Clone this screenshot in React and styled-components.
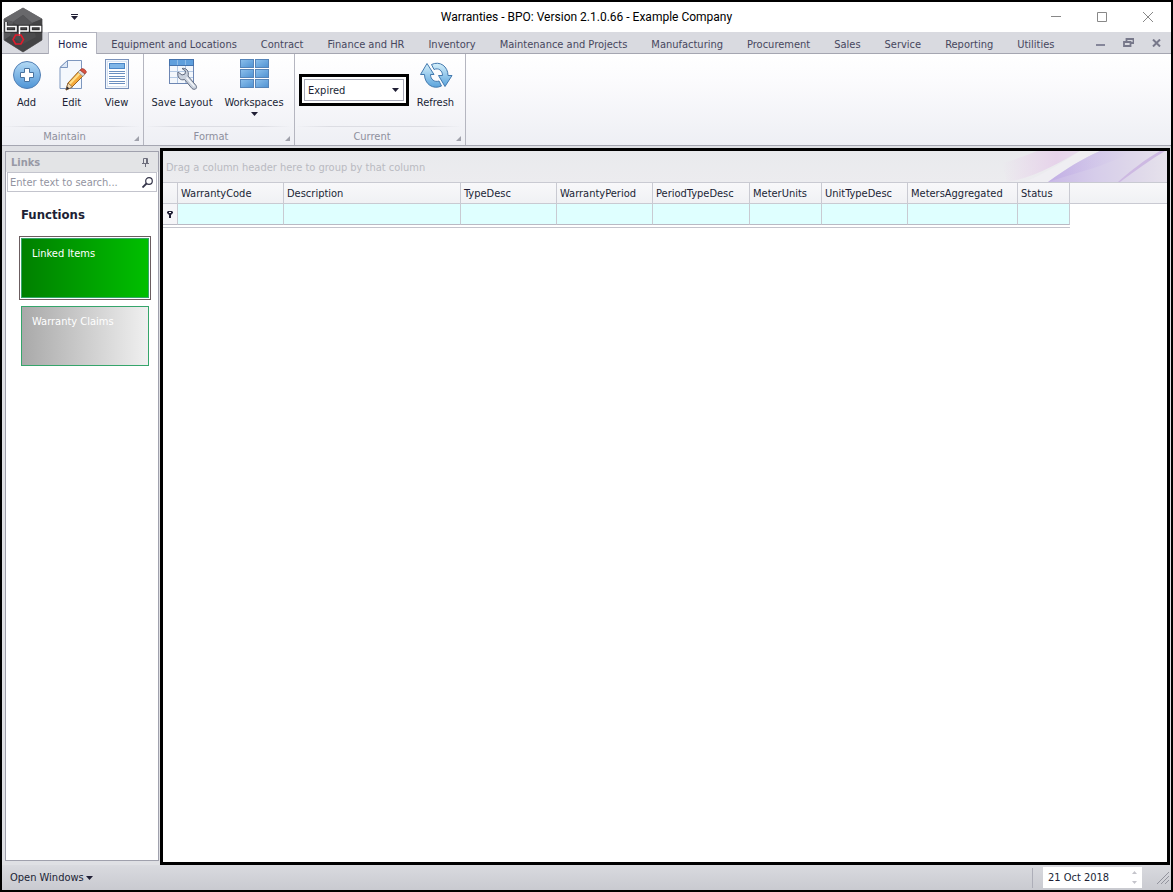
import React, { useState } from "react";
import styled, { createGlobalStyle } from "styled-components";

const GlobalStyle = createGlobalStyle`
  * {
    box-sizing: border-box;
  }

  body {
    margin: 0;
    font-family: "DejaVu Sans Condensed", "Noto Sans", Tahoma, sans-serif;
    font-size: 11px;
    line-height: 14px;
    color: #201f35;
  }

  button,
  input,
  select {
    font: inherit;
    color: inherit;
    margin: 0;
    padding: 0;
    border: 0;
    border-radius: 0;
    background: none;
  }
`;

const Window = styled.div`
  position: relative;
  display: flex;
  flex-direction: column;
  height: 100vh;
  border: 2px solid #000;
  background: #dfe0e4;
  overflow: hidden;
`;

const Logo = styled.svg`
  position: absolute;
  left: 1px;
  top: 5px;
  width: 40px;
  height: 46px;
`;

const TitleBar = styled.header`
  display: grid;
  grid-template-columns: 1fr auto 1fr;
  align-items: center;
  height: 30px;
  flex: none;
  background: #fff;
`;

const Title = styled.h1`
  margin: 0;
  font-family: Roboto, "Open Sans", sans-serif;
  font-size: 12px;
  font-weight: 400;
  color: #000;
`;

const QuickMenu = styled.button`
  display: flex;
  margin-left: 68px;
  width: 9px;
`;

const WindowButtons = styled.div`
  display: flex;
  justify-content: flex-end;
`;

const WindowButton = styled.button`
  display: flex;
  align-items: center;
  justify-content: center;
  width: 46px;
  height: 28px;
`;

const TabBar = styled.nav`
  display: flex;
  flex: none;
  height: 22px;
  padding-left: 46px;
  background: #d9dae0;
  border-bottom: 1px solid #a5a6b1;
`;

const Tab = styled.button`
  height: 21px;
  padding: 4px 12px 0;
  color: #47475e;
  white-space: nowrap;

  ${(p) =>
    p.$active &&
    `
    height: 22px;
    padding: 3px 9px 0;
    margin-right: 2px;
    color: #1e1e50;
    background: #fff;
    border: 1px solid #b3b4bf;
    border-bottom: 0;
  `}
`;

const MdiButtons = styled.div`
  display: flex;
  align-items: center;
  margin-left: auto;
  padding-right: 1px;
`;

const MdiButton = styled.button`
  display: flex;
  align-items: center;
  justify-content: center;
  width: 28px;
  height: 20px;
`;

const Ribbon = styled.section`
  display: flex;
  flex: none;
  height: 92px;
  background: linear-gradient(#fff, #fbfbfd 30%, #eeeff4);
  border-bottom: 1px solid #a5a6b1;
`;

const Group = styled.div`
  display: flex;
  flex-direction: column;
  border-right: 1px solid #b5b6c0;
  padding: 0 4px 0 2px;
`;

const GroupItems = styled.div`
  display: flex;
  height: 72px;
`;

const GroupCaption = styled.div`
  position: relative;
  height: 19px;
  padding-top: 3px;
  padding-right: 14px;
  text-align: center;
  color: #8e8f9d;
  border-top: 1px solid;
  border-image: linear-gradient(90deg, transparent, #dcdde3 20%, #dcdde3 80%, transparent) 1;
`;

const Launcher = styled.svg`
  position: absolute;
  right: 0;
  bottom: 4px;
`;

const RibbonButton = styled.button`
  display: flex;
  flex-direction: column;
  align-items: center;
  width: ${(p) => p.$width}px;
  padding-top: 5px;
  white-space: nowrap;

  svg {
    flex: none;
  }

  span {
    margin: 5px 0 2px;
  }
`;

const FilterBox = styled.label`
  position: relative;
  display: block;
  width: 110px;
  height: 32px;
  margin: 20px 1px 0 2px;
  padding: 2px;
  border: 3px solid #000;
  background: #fff;

  svg {
    position: absolute;
    right: 7px;
    top: 11px;
    pointer-events: none;
  }
`;

const FilterSelect = styled.select`
  appearance: none;
  width: 100%;
  height: 22px;
  padding: 1px 3px 0;
  border: 1px solid #a9aab8;
  background: #fff;
`;

const Body = styled.main`
  display: flex;
  flex: 1;
  min-height: 0;
  padding: 2px 1px 0 3px;
  gap: 1px;
`;

const Sidebar = styled.aside`
  flex: none;
  width: 154px;
  margin: 3px 0 4px;
  border: 1px solid #a0a1ad;
  background: #fff;
`;

const SidebarHeader = styled.div`
  display: flex;
  align-items: center;
  justify-content: space-between;
  height: 20px;
  padding: 1px 9px 0 5px;
  background: #e3e4e6;
  color: #9899a5;
  font-weight: 700;

  h2 {
    margin: 0;
    font-size: 11px;
  }

  button {
    display: flex;
  }
`;

const SearchBox = styled.label`
  display: flex;
  align-items: center;
  height: 20px;
  margin: 0 1px;
  padding: 0 3px 0 2px;
  border: 1px solid #c3c4cd;

  input {
    flex: 1;
    min-width: 0;
    padding-top: 2px;
    outline: 0;
  }

  input::placeholder {
    color: #92939f;
    opacity: 1;
  }
`;

const Functions = styled.div`
  display: flex;
  flex-direction: column;
  padding: 15px 7px 0 13px;

  h3 {
    margin: 0 0 13px 2px;
    font-size: 13px;
    line-height: 16px;
  }
`;

const Tile = styled.button`
  height: 60px;
  margin: 2px 2px 6px;
  padding: 8px 10px;
  display: flex;
  border: 1px solid #35a56b;
  color: #fff;
  background: ${(p) =>
    p.$selected
      ? "linear-gradient(90deg, #008000, #00bf00)"
      : "linear-gradient(90deg, #a9a9a9, #f0f0f0)"};
  outline: ${(p) => (p.$selected ? "1px solid #6b5d60" : "0")};
  outline-offset: 1px;
`;

const GridFrame = styled.section`
  display: flex;
  flex-direction: column;
  flex: 1;
  min-width: 0;
  border: 3px solid #000;
  background: #fff;
`;

const GroupPanel = styled.div`
  position: relative;
  display: flex;
  align-items: center;
  flex: none;
  height: 31px;
  padding: 2px 0 0 3px;
  color: #b9bac1;
  background: linear-gradient(#e9eaed, #ececef);

  svg {
    position: absolute;
    right: 0;
    top: 0;
  }
`;

const Table = styled.table`
  width: 100%;
  table-layout: fixed;
  border-collapse: separate;
  border-spacing: 0;

  th {
    height: 22px;
    padding: 2px 3px 0;
    text-align: left;
    font-weight: 400;
    white-space: nowrap;
    background: linear-gradient(#f8f8fa, #f0f1f4);
    border: 1px solid #c9cad2;
    border-width: 1px 1px 1px 0;
  }

  th:first-child,
  td:first-child {
    padding: 0;
  }

  th:last-child {
    border-right: 0;
  }

  td {
    height: 21px;
    padding: 0;
    background: #dfffff;
    border-right: 1px solid #c9cad2;
    border-bottom: 1px solid #b9bac4;
  }

  td:first-child {
    background: #f5f5f8;
  }

  td:last-child {
    background: #fff;
    border: 0;
  }

  td svg {
    display: block;
    margin: 0 auto;
  }

  td input {
    display: block;
    width: 100%;
    height: 20px;
    padding: 0 4px;
    outline: 0;
  }
`;

const TableEnd = styled.div`
  width: 907px;
  height: 3px;
  border-bottom: 1px solid #c3c4cc;
`;

const StatusBar = styled.footer`
  display: flex;
  align-items: center;
  flex: none;
  height: 25px;
  padding: 0 2px 0 8px;
  background: linear-gradient(#d9dadf, #c9cad0);
`;

const OpenWindows = styled.button`
  display: flex;
  align-items: center;
  gap: 2px;
  margin-right: auto;
`;

const Divider = styled.div`
  width: 1px;
  height: 20px;
  margin-right: 10px;
  background: #adaeb8;
`;

const DateBox = styled.label`
  display: flex;
  align-items: center;
  width: 99px;
  height: 21px;
  margin-right: 15px;
  padding: 0 3px 0 5px;
  background: #fff;

  input {
    flex: 1;
    min-width: 0;
  }
`;

const Spinner = styled.span`
  display: flex;
  flex-direction: column;

  button {
    display: flex;
    align-items: center;
    justify-content: center;
    width: 9px;
    height: 10px;
  }
`;

const TABS = [
  "Home",
  "Equipment and Locations",
  "Contract",
  "Finance and HR",
  "Inventory",
  "Maintenance and Projects",
  "Manufacturing",
  "Procurement",
  "Sales",
  "Service",
  "Reporting",
  "Utilities",
];

const COLUMNS = [
  { name: "WarrantyCode", width: 106 },
  { name: "Description", width: 177 },
  { name: "TypeDesc", width: 96 },
  { name: "WarrantyPeriod", width: 96 },
  { name: "PeriodTypeDesc", width: 97 },
  { name: "MeterUnits", width: 72 },
  { name: "UnitTypeDesc", width: 86 },
  { name: "MetersAggregated", width: 110 },
  { name: "Status", width: 52 },
];

const DownArrow = () => (
  <svg width="7" height="4" viewBox="0 0 7 4">
    <path d="M0 0h7L3.5 4z" fill="#201f35" />
  </svg>
);

const BpoLogo = () => (
  <Logo viewBox="0 0 40 46">
    <path d="M20 1L39 12V33L20 45L1 33V12z" fill="#4b4b4d" stroke="#77777a" />
    <path d="M20 1L39 12L29 16L20 8L10 15L1 12z" fill="#68686b" />
    <path d="M1 12L10 15L7 29L1 33z" fill="#59595c" />
    <path d="M39 12L29 16L33 30L39 33z" fill="#444446" />
    <path d="M7 29L20 37L33 30L39 33L20 45L1 33z" fill="#434345" />
    <path d="M20 8L29 16L20 22L10 15z" fill="#555558" />
    <path
      d="M3 15V24H13V19.500H3M16.500 29V19.500H25V24H16.500M28 19.500H37.500V24H28z"
      fill="none"
      stroke="#2c2c2e"
      strokeWidth="3.400"
    />
    <path
      d="M3 15V24H13V19.500H3M16.500 29V19.500H25V24H16.500M28 19.500H37.500V24H28z"
      fill="none"
      stroke="#fff"
      strokeWidth="1.600"
    />
    <path
      d="M12.500 28H18L20.500 32.500L18 37H12.500L10 32.500z"
      fill="none"
      stroke="#e01c2c"
      strokeWidth="1.600"
    />
  </Logo>
);

const AddIcon = () => (
  <svg width="32" height="32" viewBox="0 0 32 32">
    <defs>
      <linearGradient id="addFill" x2="0" y2="1">
        <stop stopColor="#b4daf5" />
        <stop offset="1" stopColor="#4e94d6" />
      </linearGradient>
    </defs>
    <circle cx="16" cy="16" r="13.500" fill="url(#addFill)" stroke="#527fb4" />
    <path
      d="M13.500 9.500h5v4h4v5h-4v4h-5v-4h-4v-5h4z"
      fill="#fff"
      stroke="#48729f"
    />
  </svg>
);

const EditIcon = () => (
  <svg width="32" height="32" viewBox="0 0 32 32">
    <path d="M11.500 1.500h14v28h-21.500v-21z" fill="#f4f8fd" stroke="#7d97bf" />
    <path d="M11.500 1.500v7h-7.500z" fill="#dce7f5" stroke="#7d97bf" />
    <path d="M10 31L12 24L24 11L29 15L16 28z" fill="#f5a93a" stroke="#9a6424" />
    <path d="M13.500 25L25.500 12.500" stroke="#ffe08a" strokeWidth="2" />
    <path d="M10 31L12 24L16.500 28z" fill="#f4dcb5" stroke="#7d5a35" strokeWidth=".7" />
    <path d="M10 31l1-3.500l2.500 2z" fill="#2c2c38" />
    <path d="M22 13L24 11L29 15L27 17.500z" fill="#ddd" stroke="#888" strokeWidth=".7" />
    <path d="M24 11l2-1.500q3 0 4.500 3.500L29 15z" fill="#d9513f" stroke="#9f3a30" strokeWidth=".7" />
  </svg>
);

const ViewIcon = () => (
  <svg width="32" height="32" viewBox="0 0 32 32">
    <rect x="4.500" y="0.500" width="23" height="29" fill="#f1f6fc" stroke="#7991ba" />
    <rect x="6.500" y="2.500" width="19" height="25" fill="#fff" stroke="#d5e1f1" />
    <rect x="8.500" y="4.500" width="15" height="5" fill="#7fb6e8" stroke="#4b86c6" />
    <path
      d="M8 12.500h16M8 14.500h16M8 17.500h16M8 19.500h16M8 22.500h16M8 24.500h16"
      stroke="#6b8fc0"
    />
  </svg>
);

const SaveLayoutIcon = () => (
  <svg width="32" height="32" viewBox="0 0 32 32">
    <rect x="3.500" y="0.500" width="24" height="24" fill="#f3f7fc" stroke="#6d86b3" />
    <rect x="3.500" y="0.500" width="24" height="6" fill="#5e9fdd" stroke="#4472ac" />
    <path d="M11.500 7v17M19.500 7v17M4 12.500h23M4 18.500h23" stroke="#b4c9e4" />
    <path d="M11.500 1v5M19.500 1v5" stroke="#8cbbe8" />
    <path
      d="M12 13L16 16L19 15L19.500 12L16 9.500C20 8.500 23.500 12 22 17L30 26.500C32 29.500 28.500 31.500 26 29.500L18.500 20.500C14 22 11 18 12 13z"
      fill="#c9d1dd"
      stroke="#636c80"
    />
    <path d="M20.500 18.500l8 9" stroke="#f4f6f9" strokeWidth="1.500" />
  </svg>
);

const WorkspacesIcon = () => (
  <svg width="32" height="32" viewBox="0 0 32 32">
    <defs>
      <linearGradient id="cellFill" x2="1" y2="1">
        <stop stopColor="#8dc0ec" />
        <stop offset="1" stopColor="#4e91d2" />
      </linearGradient>
    </defs>
    {[0, 10, 20].map((y) =>
      [2, 17].map((x) => (
        <rect
          key={`${x}-${y}`}
          x={x + 0.5}
          y={y + 0.5}
          width="13"
          height="8"
          fill="url(#cellFill)"
          stroke="#5584b9"
        />
      ))
    )}
  </svg>
);

const RefreshIcon = () => (
  <svg width="34" height="32" viewBox="0 0 34 32">
    <defs>
      <linearGradient id="refreshFill" x2="0" y2="1">
        <stop stopColor="#d5f0fb" />
        <stop offset="1" stopColor="#5aa3dc" />
      </linearGradient>
    </defs>
    <path
      d="M8 4.500L15 15.500H11.500C11.500 20.500 15.500 23.500 20 22L22.500 27C14 31 5.500 25 5.500 15.500H1.500z"
      fill="url(#refreshFill)"
      stroke="#4379ae"
    />
    <path
      d="M26 27.500L33 16.500H29C29 7.500 21 1.500 12.500 5.500L15 10.500C19.500 8.500 23.500 11.500 23.500 16.500H19.500z"
      fill="url(#refreshFill)"
      stroke="#4379ae"
    />
  </svg>
);

function RibbonGroup({ caption, children }) {
  return (
    <Group>
      <GroupItems>{children}</GroupItems>
      <GroupCaption>
        {caption}
        <Launcher width="5" height="5" viewBox="0 0 5 5">
          <path d="M5 0v5H0z" fill="#a0a1ab" />
        </Launcher>
      </GroupCaption>
    </Group>
  );
}

function RibbonBar() {
  const [filter, setFilter] = useState("Expired");

  return (
    <Ribbon>
      <RibbonGroup caption="Maintain">
        <RibbonButton $width={45}>
          <AddIcon />
          <span>Add</span>
        </RibbonButton>
        <RibbonButton $width={45}>
          <EditIcon />
          <span>Edit</span>
        </RibbonButton>
        <RibbonButton $width={45}>
          <ViewIcon />
          <span>View</span>
        </RibbonButton>
      </RibbonGroup>
      <RibbonGroup caption="Format">
        <RibbonButton $width={72}>
          <SaveLayoutIcon />
          <span>Save Layout</span>
        </RibbonButton>
        <RibbonButton $width={72}>
          <WorkspacesIcon />
          <span>Workspaces</span>
          <DownArrow />
        </RibbonButton>
      </RibbonGroup>
      <RibbonGroup caption="Current">
        <FilterBox>
          <FilterSelect
            aria-label="Status filter"
            value={filter}
            onChange={(e) => setFilter(e.target.value)}
          >
            <option>Expired</option>
          </FilterSelect>
          <DownArrow />
        </FilterBox>
        <RibbonButton $width={51}>
          <RefreshIcon />
          <span>Refresh</span>
        </RibbonButton>
      </RibbonGroup>
    </Ribbon>
  );
}

function LinksPanel() {
  return (
    <Sidebar>
      <SidebarHeader>
        <h2>Links</h2>
        <button aria-label="Pin">
          <svg width="7" height="9" viewBox="0 0 7 9">
            <path d="M1.500 5V.5h4V5M0 5.500h7M3.500 6v3M4.500 1v4" fill="none" stroke="#6d6e7c" />
          </svg>
        </button>
      </SidebarHeader>
      <SearchBox>
        <input aria-label="Search" placeholder="Enter text to search..." />
        <svg width="11" height="11" viewBox="0 0 11 11">
          <circle cx="7" cy="4" r="3.300" fill="none" stroke="#35354a" strokeWidth="1.200" />
          <path d="M4.500 6.500L.5 10.500" stroke="#35354a" strokeWidth="1.800" />
        </svg>
      </SearchBox>
      <Functions>
        <h3>Functions</h3>
        <Tile $selected>Linked Items</Tile>
        <Tile>Warranty Claims</Tile>
      </Functions>
    </Sidebar>
  );
}

function WarrantyGrid() {
  return (
    <GridFrame>
      <GroupPanel>
        Drag a column header here to group by that column
        <svg width="165" height="31" viewBox="0 0 165 31">
          <defs>
            <linearGradient id="pinkFade">
              <stop stopColor="#e8d2ea" stopOpacity="0" />
              <stop offset=".7" stopColor="#e6d3ea" />
              <stop offset="1" stopColor="#e8dcee" />
            </linearGradient>
            <linearGradient id="violetFade">
              <stop stopColor="#c9b9e6" />
              <stop offset=".4" stopColor="#d6cdea" />
              <stop offset=".8" stopColor="#e0daea" />
              <stop offset="1" stopColor="#e6e2ec" />
            </linearGradient>
            <linearGradient id="streakFade">
              <stop stopColor="#bda8e4" stopOpacity=".6" />
              <stop offset="1" stopColor="#cfc2ec" stopOpacity="0" />
            </linearGradient>
          </defs>
          <path d="M0 12C15 8 25 4 35 0H78C60 10 35 26 5 31z" fill="url(#pinkFade)" />
          <path d="M46 31C65 17 80 8 98 0H78C60 12 40 24 22 31z" fill="#efeef2" />
          <path d="M46 31C65 17 80 8 98 0H165V31z" fill="url(#violetFade)" />
          <path d="M46 31C80 20 108 14 130 0H98C80 8 65 17 46 31z" fill="url(#streakFade)" />
          <path d="M118 31C133 20 148 9 163 0H158C142 9 130 19 116 31z" fill="#cdb9e2" />
        </svg>
      </GroupPanel>
      <Table>
        <colgroup>
          <col width="15" />
          {COLUMNS.map((col) => (
            <col key={col.name} width={col.width} />
          ))}
          <col />
        </colgroup>
        <thead>
          <tr>
            <th />
            {COLUMNS.map((col) => (
              <th key={col.name}>{col.name}</th>
            ))}
            <th />
          </tr>
        </thead>
        <tbody>
          <tr>
            <td>
              <svg width="6" height="7" viewBox="0 0 6 7">
                <path d="M1 0h4l1 1v1L4 4v3H2V4L0 2V1z" fill="#201f35" />
                <path d="M2 1h2v1H2z" fill="#fff" />
              </svg>
            </td>
            {COLUMNS.map((col) => (
              <td key={col.name}>
                <input aria-label={`Filter ${col.name}`} />
              </td>
            ))}
            <td />
          </tr>
        </tbody>
      </Table>
      <TableEnd />
    </GridFrame>
  );
}

function App() {
  const [tab, setTab] = useState("Home");

  return (
    <>
      <GlobalStyle />
      <Window>
        <TitleBar>
          <QuickMenu aria-label="Customize quick access">
            <svg width="9" height="7" viewBox="0 0 9 7">
              <path d="M1 0h7v1H1zM1 2h7L4.500 6z" fill="#201f35" />
            </svg>
          </QuickMenu>
          <Title>Warranties - BPO: Version 2.1.0.66 - Example Company</Title>
          <WindowButtons>
            <WindowButton aria-label="Minimize">
              <svg width="10" height="10" viewBox="0 0 10 10">
                <path d="M0 4.500h10" stroke="#888" />
              </svg>
            </WindowButton>
            <WindowButton aria-label="Maximize">
              <svg width="10" height="10" viewBox="0 0 10 10">
                <path d="M.5.5h9v9h-9z" fill="none" stroke="#888" />
              </svg>
            </WindowButton>
            <WindowButton aria-label="Close">
              <svg width="10" height="10" viewBox="0 0 10 10">
                <path d="M0 0l10 10M10 0L0 10" stroke="#888" />
              </svg>
            </WindowButton>
          </WindowButtons>
        </TitleBar>
        <TabBar>
          {TABS.map((name) => (
            <Tab key={name} $active={name === tab} onClick={() => setTab(name)}>
              {name}
            </Tab>
          ))}
          <MdiButtons>
            <MdiButton aria-label="Minimize document">
              <svg width="9" height="9" viewBox="0 0 9 9">
                <path d="M0 6h9v2H0z" fill="#85869a" />
              </svg>
            </MdiButton>
            <MdiButton aria-label="Restore document">
              <svg width="11" height="9" viewBox="0 0 11 9">
                <path d="M3.500 3V1h7v4H8M1 4h6.500v4H1z" fill="none" stroke="#77788a" strokeWidth="1.800" />
              </svg>
            </MdiButton>
            <MdiButton aria-label="Close document">
              <svg width="9" height="8" viewBox="0 0 9 8">
                <path d="M1 .5l7 7M8 .5l-7 7" stroke="#77788a" strokeWidth="2" />
              </svg>
            </MdiButton>
          </MdiButtons>
        </TabBar>
        <BpoLogo />
        <RibbonBar />
        <Body>
          <LinksPanel />
          <WarrantyGrid />
        </Body>
        <StatusBar>
          <OpenWindows>
            Open Windows
            <DownArrow />
          </OpenWindows>
          <Divider />
          <DateBox>
            <input aria-label="Date" defaultValue="21 Oct 2018" />
            <Spinner>
              <button aria-label="Next day">
                <svg width="5" height="3" viewBox="0 0 5 3">
                  <path d="M0 3h5L2.500 0z" fill="#c4c4cb" />
                </svg>
              </button>
              <button aria-label="Previous day">
                <svg width="5" height="3" viewBox="0 0 5 3">
                  <path d="M0 0h5L2.500 3z" fill="#c4c4cb" />
                </svg>
              </button>
            </Spinner>
          </DateBox>
          <svg width="12" height="12" viewBox="0 0 12 12">
            <path d="M0 12L12 0M4 12L12 4M8 12L12 8" stroke="#92939d" />
          </svg>
        </StatusBar>
      </Window>
    </>
  );
}

export default App;
